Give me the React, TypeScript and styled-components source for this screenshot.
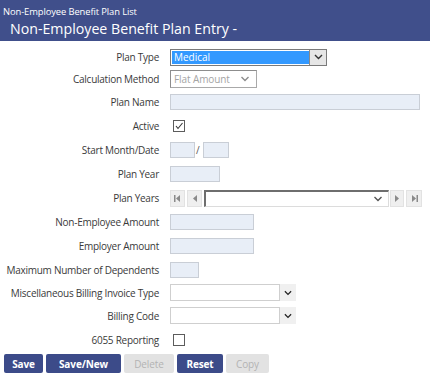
import React from "react";
import styled, { createGlobalStyle } from "styled-components";

const GlobalStyle = createGlobalStyle`
  body {
    margin: 0;
    background: #fff;
    font-family: "Open Sans", "Noto Sans", sans-serif;
    color: #333;
  }
`;

const Page = styled.div`
  width: 430px;
  height: 380px;
  overflow: hidden;
`;

const Header = styled.div`
  height: 41px;
  background: #404f8b;
  color: #fff;
  display: flex;
  flex-direction: column;
  padding-left: 3px;
  box-sizing: border-box;
`;

const Crumb = styled.div`
  font-size: 9.4px;
  line-height: 12px;
  margin-top: 6px;
  letter-spacing: -0.1px;
`;

const Title = styled.div`
  font-size: 14.2px;
  line-height: 20px;
  margin-left: 7px;
  margin-top: 1px;
`;

const Form = styled.div`
  display: flex;
  flex-direction: column;
  padding-top: 5px;
`;

const Row = styled.div<{ $h?: number }>`
  display: grid;
  grid-template-columns: 160px 1fr;
  column-gap: 10px;
  align-items: center;
  height: ${(p) => p.$h ?? 24}px;
`;

const Label = styled.div`
  text-align: right;
  font-size: 10px;
  letter-spacing: -0.26px;
  color: #3a3a3a;
  white-space: nowrap;
  padding-right: 1px;
`;

const Field = styled.div`
  display: flex;
  align-items: center;
`;

const TextBox = styled.div<{ $w: number }>`
  width: ${(p) => p.$w}px;
  height: 16px;
  box-sizing: border-box;
  border: 1px solid #c9ced6;
  background: #e8eef7;
`;

const Slash = styled.span`
  font-size: 10px;
  color: #555;
  margin: 0 3px 0 1px;
`;

const PlanSelect = styled.div`
  width: 157px;
  height: 17px;
  box-sizing: border-box;
  border: 1px solid #7a7a7a;
  display: flex;
  background: #fff;
`;

const Highlight = styled.div`
  flex: 1;
  margin: 1px 0 1px 1px;
  background: #3399ff;
  color: #fff;
  font-size: 10px;
  line-height: 13px;
  padding-left: 2px;
`;

const ArrowBtn = styled.div`
  width: 16px;
  border-left: 1px solid #8a8a8a;
  background: #e6e6e6;
  display: flex;
  align-items: center;
  justify-content: center;
`;

const FlatSelect = styled.div`
  width: 87px;
  height: 18px;
  box-sizing: border-box;
  border: 1px solid #a9a9a9;
  border-top-color: #8d8d8d;
  border-left-color: #8d8d8d;
  display: flex;
  align-items: center;
  justify-content: space-between;
  padding: 0 6px 0 3px;
  color: #a4a4a4;
  font-size: 10px;
  letter-spacing: -0.1px;
  background: #fff;
`;

const CheckBox = styled.div`
  width: 12px;
  height: 12px;
  box-sizing: border-box;
  border: 1px solid #5c5c5c;
  margin-left: 3px;
  background: #fff;
  display: flex;
  align-items: center;
  justify-content: center;
`;

const NavBtn = styled.div<{ $w: number }>`
  width: ${(p) => p.$w}px;
  height: 17px;
  background: #efefef;
  border: 1px solid #e2e2e2;
  box-sizing: border-box;
  display: flex;
  align-items: center;
  justify-content: center;
  margin-right: 2px;
`;

const YearSelect = styled.div`
  width: 185px;
  height: 17px;
  box-sizing: border-box;
  border: 1px solid #dcdcdc;
  border-top: 2px solid #6e6e6e;
  border-left: 2px solid #6e6e6e;
  background: #fff;
  display: flex;
  align-items: center;
  justify-content: flex-end;
  padding-right: 5px;
  margin-right: 1px;
`;

const ComboBox = styled.div`
  display: flex;
  height: 17px;
`;

const ComboInput = styled.div`
  width: 110px;
  box-sizing: border-box;
  border: 1px solid #cfcfcf;
  background: #fff;
`;

const ComboArrow = styled.div`
  width: 16px;
  background: #f0f0f0;
  display: flex;
  align-items: center;
  justify-content: center;
`;

const Buttons = styled.div`
  display: flex;
  gap: 3px;
  padding: 1px 0 0 4px;
`;

const Button = styled.div<{ $w: number; $disabled?: boolean }>`
  width: ${(p) => p.$w}px;
  height: 19px;
  border-radius: 2px;
  background: ${(p) => (p.$disabled ? "#e2e2e2" : "#3c4b89")};
  color: ${(p) => (p.$disabled ? "#b3b3b3" : "#fff")};
  font-weight: ${(p) => (p.$disabled ? 400 : 700)};
  font-size: 10px;
  display: flex;
  align-items: center;
  justify-content: center;
  letter-spacing: -0.1px;
`;

const Chevron = ({ color = "#333", w = 9 }: { color?: string; w?: number }) => (
  <svg width={w} height={6} viewBox="0 0 9 6">
    <path d="M1 1 L4.5 4.5 L8 1" fill="none" stroke={color} strokeWidth="1.4" />
  </svg>
);

const Tri = ({ dir, bar }: { dir: "l" | "r"; bar?: boolean }) => (
  <svg width={9} height={9} viewBox="0 0 9 9">
    {dir === "l" ? (
      <>
        {bar && <rect x="1" y="1" width="1.5" height="7" fill="#8a8a8a" />}
        <path d="M7 1 L3 4.5 L7 8 Z" fill="#8a8a8a" />
      </>
    ) : (
      <>
        <path d="M2 1 L6 4.5 L2 8 Z" fill="#8a8a8a" />
        {bar && <rect x="6.5" y="1" width="1.5" height="7" fill="#8a8a8a" />}
      </>
    )}
  </svg>
);

const Check = () => (
  <svg width={10} height={10} viewBox="0 0 10 10">
    <path d="M2 5 L4 7.5 L8.5 2" fill="none" stroke="#333" strokeWidth="1.1" />
  </svg>
);

const Combo = () => (
  <ComboBox>
    <ComboInput />
    <ComboArrow>
      <Chevron w={8} color="#222" />
    </ComboArrow>
  </ComboBox>
);

const App = () => {
  return (
    <Page>
      <GlobalStyle />
      <Header>
        <Crumb>Non-Employee Benefit Plan List</Crumb>
        <Title>Non-Employee Benefit Plan Entry -</Title>
      </Header>
      <Form>
        <Row $h={22}>
          <Label>Plan Type</Label>
          <Field>
            <PlanSelect>
              <Highlight>Medical</Highlight>
              <ArrowBtn>
                <Chevron />
              </ArrowBtn>
            </PlanSelect>
          </Field>
        </Row>
        <Row $h={22}>
          <Label>Calculation Method</Label>
          <Field>
            <FlatSelect>
              Flat Amount
              <Chevron color="#8c8c8c" w={10} />
            </FlatSelect>
          </Field>
        </Row>
        <Row>
          <Label>Plan Name</Label>
          <Field>
            <TextBox $w={250} />
          </Field>
        </Row>
        <Row>
          <Label>Active</Label>
          <Field>
            <CheckBox>
              <Check />
            </CheckBox>
          </Field>
        </Row>
        <Row>
          <Label>Start Month/Date</Label>
          <Field>
            <TextBox $w={25} />
            <Slash>/</Slash>
            <TextBox $w={26} />
          </Field>
        </Row>
        <Row>
          <Label>Plan Year</Label>
          <Field>
            <TextBox $w={50} />
          </Field>
        </Row>
        <Row>
          <Label>Plan Years</Label>
          <Field>
            <NavBtn $w={15}>
              <Tri dir="l" bar />
            </NavBtn>
            <NavBtn $w={15}>
              <Tri dir="l" />
            </NavBtn>
            <YearSelect>
              <Chevron color="#555" w={10} />
            </YearSelect>
            <NavBtn $w={14}>
              <Tri dir="r" />
            </NavBtn>
            <NavBtn $w={16}>
              <Tri dir="r" bar />
            </NavBtn>
          </Field>
        </Row>
        <Row>
          <Label>Non-Employee Amount</Label>
          <Field>
            <TextBox $w={84} />
          </Field>
        </Row>
        <Row>
          <Label>Employer Amount</Label>
          <Field>
            <TextBox $w={84} />
          </Field>
        </Row>
        <Row $h={23}>
          <Label>Maximum Number of Dependents</Label>
          <Field>
            <TextBox $w={29} />
          </Field>
        </Row>
        <Row $h={23}>
          <Label>Miscellaneous Billing Invoice Type</Label>
          <Field>
            <Combo />
          </Field>
        </Row>
        <Row $h={23}>
          <Label>Billing Code</Label>
          <Field>
            <Combo />
          </Field>
        </Row>
        <Row $h={26}>
          <Label>6055 Reporting</Label>
          <Field>
            <CheckBox />
          </Field>
        </Row>
      </Form>
      <Buttons>
        <Button $w={39}>Save</Button>
        <Button $w={75}>Save/New</Button>
        <Button $w={50} $disabled>
          Delete
        </Button>
        <Button $w={46}>Reset</Button>
        <Button $w={43} $disabled>
          Copy
        </Button>
      </Buttons>
    </Page>
  );
};

export default App;
